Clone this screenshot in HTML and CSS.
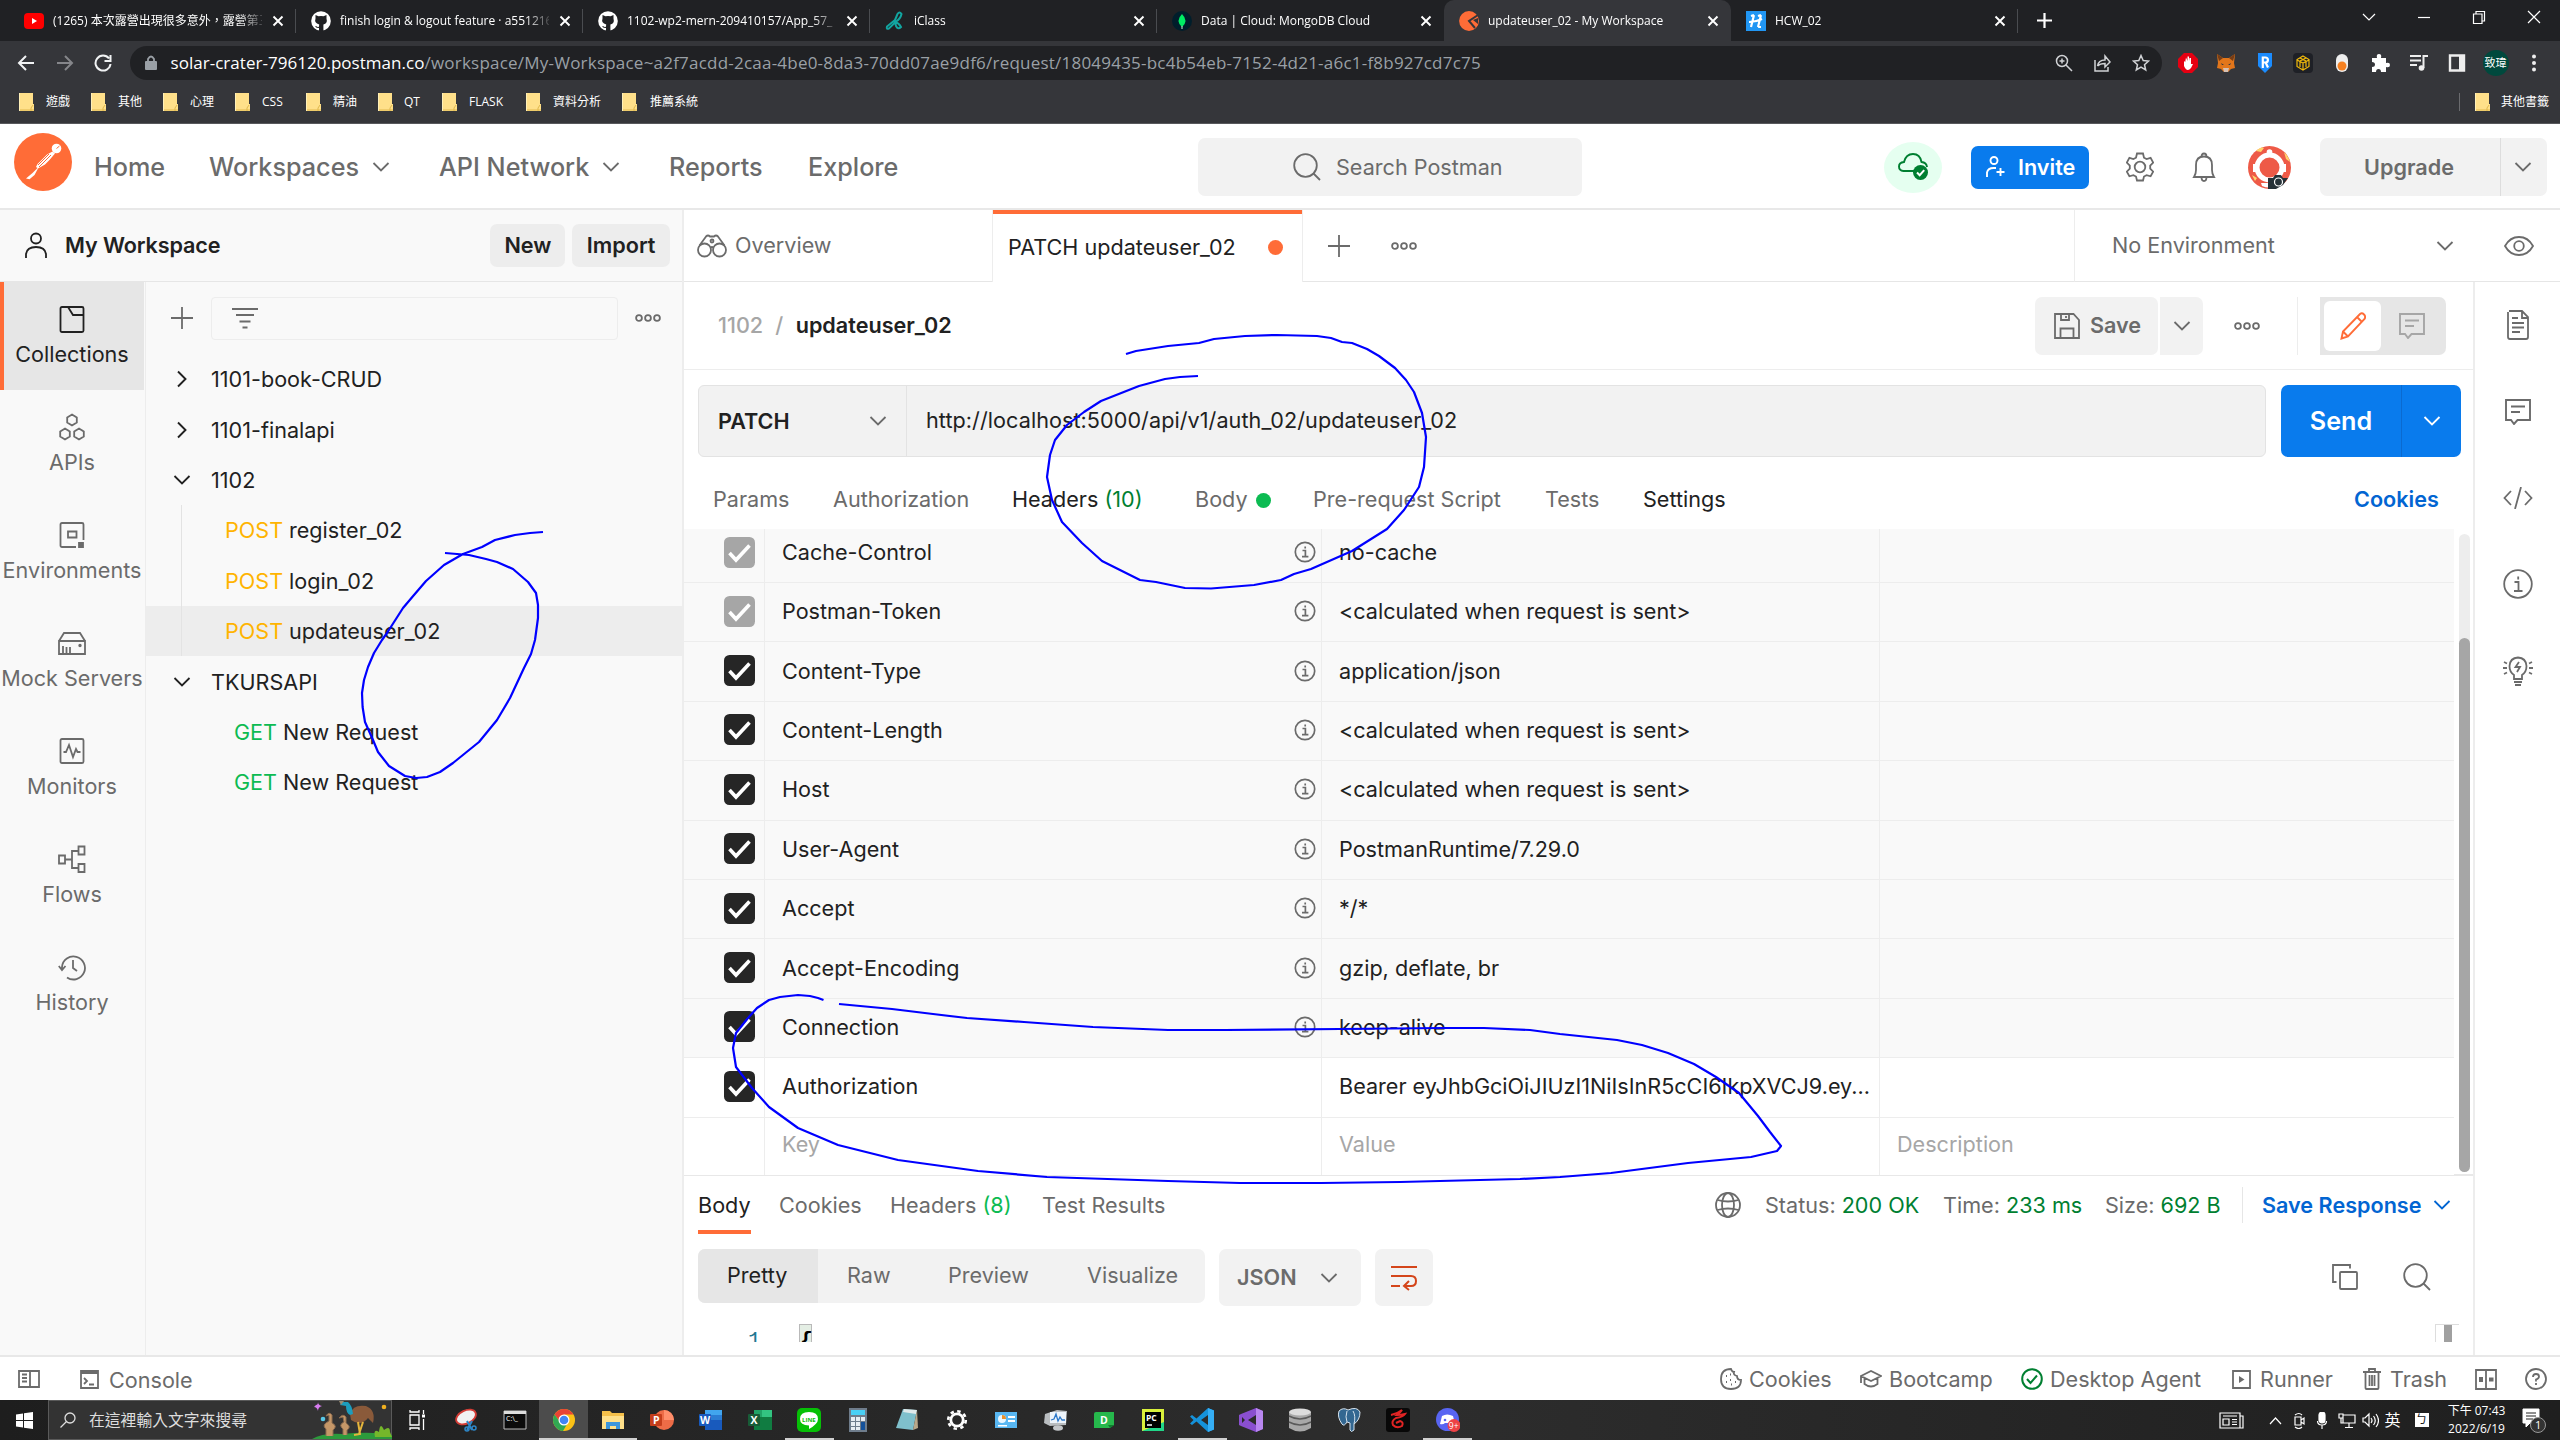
FILE: index.html
```html
<!DOCTYPE html>
<html lang="zh-Hant">
<head>
<meta charset="utf-8">
<title>updateuser_02 - My Workspace</title>
<link rel="stylesheet" href="styles.css">
</head>
<body>
<svg class="sprite" width="0" height="0">
  <symbol id="down" viewBox="0 0 18 12"><path d="M1.5 2 9 9.5 16.5 2" fill="none" stroke="currentColor" stroke-width="1.8"/></symbol>
  <symbol id="right" viewBox="0 0 12 18"><path d="M2 1.5 9.5 9 2 16.5" fill="none" stroke="currentColor" stroke-width="1.9"/></symbol>
  <symbol id="dots" viewBox="0 0 26 10"><g fill="none" stroke="currentColor" stroke-width="1.8"><circle cx="4" cy="5" r="2.9"/><circle cx="13" cy="5" r="2.9"/><circle cx="22" cy="5" r="2.9"/></g></symbol>
  <symbol id="plus" viewBox="0 0 22 22"><path d="M11 0v22M0 11h22" stroke="currentColor" stroke-width="1.8"/></symbol>
  <symbol id="plusbold" viewBox="0 0 15 15"><path d="M7.500 0v15M0 7.500h15" stroke="currentColor" stroke-width="2.200"/></symbol>
  <symbol id="x" viewBox="0 0 12 12"><path d="m1.5 1.5 9 9m0-9-9 9" stroke="currentColor" stroke-width="1.9"/></symbol>
  <symbol id="check" viewBox="0 0 31 31"><rect width="31" height="31" rx="5.5" fill="currentColor"/><path d="m5.500 16 6.500 7L25.500 8.500" fill="none" stroke="#fff" stroke-width="3.600"/></symbol>
  <symbol id="info" viewBox="0 0 22 22"><g fill="none" stroke="currentColor" stroke-width="1.700"><circle cx="11" cy="11" r="9.700"/><path d="M8.500 9.500H11.400V15.500M8 15.700h6.400M11.200 5.500v2"/></g></symbol>
  <symbol id="folder" viewBox="0 0 15 18"><path d="M0 0h14v11h1v7H0z" fill="#ffe08a"/><path d="M0 17h15M14 12l-2 3v3" stroke="#e0b84c" fill="none"/><path d="M.5 0v18" stroke="#fff0b8"/></symbol>
  <symbol id="lens" viewBox="0 0 28 28"><g fill="none" stroke="currentColor" stroke-width="1.800"><circle cx="12.500" cy="12.500" r="11.300"/><path d="m20.500 20.500 6.500 6.500"/></g></symbol>
  <symbol id="note" viewBox="0 0 26 26"><g fill="none" stroke="currentColor" stroke-width="1.900"><path d="M1 1h24v20H12.500l-3.500 4-3-4H1z"/><path d="M6 7.500h14M6 13h9"/></g></symbol>
  <symbol id="github" viewBox="0 0 20 20"><circle cx="10" cy="10" r="9.800" fill="#fff"/><path d="M4.500 4l3 1.200q2.500-.6 5 0L15.500 4v3.500q1.400 5-3.100 6V20H8v-3q-3 .6-4-2l2 .5q1 1.500 2 0l.2-2Q3 12 4.500 7.500z" fill="#202124"/></symbol>
</svg>

<div class="browser">
  <div class="tabs">
    <div class="tab"><svg class="fav" viewBox="0 0 20 20"><rect y="2" width="20" height="16" rx="4" fill="#f00"/><path d="m8 7 5 3-5 3z" fill="#fff"/></svg><span class="t">(1265) 本次露營出現很多意外，露營第三天</span><svg class="x"><use href="#x"/></svg></div>
    <div class="tab"><svg class="fav"><use href="#github"/></svg><span class="t">finish login &amp; logout feature · a551216</span><svg class="x"><use href="#x"/></svg></div>
    <div class="tab"><svg class="fav"><use href="#github"/></svg><span class="t">1102-wp2-mern-209410157/App_57_</span><svg class="x"><use href="#x"/></svg></div>
    <div class="tab"><svg class="fav" viewBox="0 0 20 20"><g fill="none" stroke="#12a5a0" stroke-width="2"><path d="M10 9 12.500 3q2-3 4 0-1 5-6 8L4 17.500q-3 1-2-2zM10 11q4 1 6 5-3 3-5-1z"/></g></svg><span class="t">iClass</span><svg class="x"><use href="#x"/></svg></div>
    <div class="tab nosep"><svg class="fav" viewBox="0 0 20 20"><circle cx="10" cy="10" r="10" fill="#001e2b"/><path d="M10 3q7 7 0 13-7-6 0-13" fill="#00ed64"/><path d="M10 15v3" stroke="#c3f4d7"/></svg><span class="t">Data | Cloud: MongoDB Cloud</span><svg class="x"><use href="#x"/></svg></div>
    <div class="tab active"><svg class="fav" viewBox="0 0 20 20"><circle cx="10" cy="10" r="9.900" fill="#ff6c37"/><path d="m19 4-9 6 6 7" fill="none" stroke="#35363a" stroke-width="2"/><path d="m14 9 5-2v6z" fill="#35363a"/></svg><span class="t">updateuser_02 - My Workspace</span><svg class="x"><use href="#x"/></svg></div>
    <div class="tab"><svg class="fav" viewBox="0 0 20 20"><rect width="20" height="20" fill="#2196f3"/><path d="M8 4 5 16M15 4l-3 12M3 11q7 0 13-3M5 5l3-1M12 16h3M12 5l3-1" stroke="#fff" stroke-width="2.200"/></svg><span class="t">HCW_02</span><svg class="x"><use href="#x"/></svg></div>
    <svg class="newtab"><use href="#plusbold"/></svg>
    <div class="win">
      <svg viewBox="0 0 14 10"><path d="m1 2 6 6 6-6" /></svg>
      <svg viewBox="0 0 14 10"><path d="M1 5.500h12"/></svg>
      <svg viewBox="0 0 14 14"><path d="M1.500 4h8.500v9.500H1.500zM4 4V1.500h8.500V11H10"/></svg>
      <svg viewBox="0 0 14 14"><path d="m1 1 12 12M13 1 1 13"/></svg>
    </div>
  </div>
  <div class="toolbar">
    <svg viewBox="0 0 18 18"><path d="M17 9H2M9 2 2 9l7 7"/></svg>
    <svg class="off" viewBox="0 0 18 18"><path d="M1 9h15M9 2l7 7-7 7"/></svg>
    <svg viewBox="0 0 18 18"><path d="M15 4.500A7.500 7.500 0 1 0 16.500 10M16.500 1v6h-6"/></svg>
    <div class="pill">
      <svg viewBox="0 0 12 16" class="lock"><path d="M3 7V4q3-5 6 0v3" fill="none" stroke="#9aa0a6" stroke-width="1.800"/><rect y="6" width="12" height="9" rx="1" fill="#9aa0a6"/></svg>
      <span class="url"><b>solar-crater-796120.postman.co</b><span>/workspace/My-Workspace~a2f7acdd-2caa-4be0-8da3-70dd07ae9df6/request/18049435-bc4b54eb-7152-4d21-a6c1-f8b927cd7c75</span></span>
      <div class="pillicons">
        <svg viewBox="0 0 18 18"><circle cx="7" cy="7" r="5.500"/><path d="m11 11 6 6M7 4.500v5M4.500 7h5"/></svg>
        <svg viewBox="0 0 18 18"><path d="M2 6v11h13v-4M4.500 12q1-6 7.500-6V2l5 6-5 5V9.500q-5 0-7.500 2.500"/></svg>
        <svg viewBox="0 0 18 18"><path d="m9 1.500 2.200 5 5.300.5-4 3.700 1.200 5.300L9 13.200 4.300 16l1.200-5.300-4-3.700 5.300-.5z"/></svg>
      </div>
    </div>
    <div class="exts">
      <svg viewBox="0 0 20 20"><path d="M6 0h8l6 6v8l-6 6H6l-6-6V6z" fill="#e60012"/><path d="M6 8v5q3 7 7 2l2-4-2 0V5l-1.500 0L11 8V3.500H9.500V8L8 4.500 7.200 9z" fill="#fff"/></svg>
      <svg viewBox="0 0 20 20"><path d="m1 1 6 4h6l6-4-1 9 1 5-4 1-3 3H8l-3-3-4-1 1-5z" fill="#e2761b"/><path d="m1 1 6 4-4 3zM19 1l-6 4 4 3z" fill="#763d16"/><path d="M7 15h6l-1 4H8z" fill="#d7c1b3"/><path d="M5 10l3 2H6zM15 10l-3 2h2z" fill="#233447"/></svg>
      <svg viewBox="0 0 20 20"><path d="M3 0h14v13l-7 7-7-7z" fill="#1b8cff"/><path d="M7.800 15V4.500h2.500q2.600 0 2.600 2.500t-2.600 2.500H8m2.600 0 2.400 5" fill="none" stroke="#fff" stroke-width="2.200"/></svg>
      <svg viewBox="0 0 20 20"><rect width="20" height="20" rx="4" fill="#1e2026"/><path d="m10 3 6 3.500v7L10 17l-6-3.500v-7zM4 7l6 3 6-3M10 10v7M7 5l6 3M13 5 7 8M7 9v5M13 9v5" fill="none" stroke="#f0b90b" stroke-width="1.200"/></svg>
      <svg viewBox="0 0 20 20"><rect x="4" y="1" width="12" height="18" rx="6" fill="#eee"/><circle cx="10" cy="13" r="4.500" fill="#f58020"/></svg>
      <svg viewBox="0 0 20 20"><path d="M2 5h5q-1-4 2-4t2 4h5v5q4-1 4 2t-4 2v5h-5q0-3-2.500-3T6 19H2v-5q3 0 3-2.500T2 9z" fill="#fff"/></svg>
      <svg viewBox="0 0 20 20"><path d="M1 3h11M1 7.500h11M1 12h7M14.500 15V3H19" fill="none" stroke="#eee" stroke-width="2"/><circle cx="12.500" cy="15" r="2.800" fill="#eee"/></svg>
      <svg viewBox="0 0 20 20"><path d="M3 2.500h14v15H3z" fill="none" stroke="#eee" stroke-width="2.400"/><path d="M12 2h5v16h-5z" fill="#eee"/></svg>
      <span class="me">致瑋</span>
      <svg viewBox="0 0 20 20"><g fill="#eee"><circle cx="10" cy="3.500" r="2"/><circle cx="10" cy="10" r="2"/><circle cx="10" cy="16.500" r="2"/></g></svg>
    </div>
  </div>
  <div class="marks">
    <span><svg><use href="#folder"/></svg></span><span>遊戲</span>
    <span><svg><use href="#folder"/></svg></span><span>其他</span>
    <span><svg><use href="#folder"/></svg></span><span>心理</span>
    <span><svg><use href="#folder"/></svg></span><span>CSS</span>
    <span><svg><use href="#folder"/></svg></span><span>精油</span>
    <span><svg><use href="#folder"/></svg></span><span>QT</span>
    <span><svg><use href="#folder"/></svg></span><span>FLASK</span>
    <span><svg><use href="#folder"/></svg></span><span>資料分析</span>
    <span><svg><use href="#folder"/></svg></span><span>推薦系統</span>
    <span class="other"><svg><use href="#folder"/></svg></span><span>其他書籤</span>
  </div>
</div>

<header class="top">
  <svg width="58" height="58" class="logo" viewBox="0 0 58 58"><circle cx="29" cy="29" r="29" fill="#ff6c37"/><circle cx="42.500" cy="15.500" r="4.800" fill="#fff"/><path d="M38.500 18.500 33 21.500 23.500 31 22 34l1.500 1-5 5L12 45.500l3.500.8L20.500 42 24 35.500 31 31.500 35 27.500 41 20.500z" fill="#fff"/><path d="M37 22 25 34M35 21 24 32M42.500 15.500l3-2.500" stroke="#ff6c37" stroke-width="1"/></svg>
  <a>Home</a>
  <a>Workspaces<svg class="dn"><use href="#down"/></svg></a>
  <a>API Network<svg class="dn"><use href="#down"/></svg></a>
  <a>Reports</a>
  <a>Explore</a>
  <div class="search"><svg width="28" height="28"><use href="#lens"/></svg><span>Search Postman</span></div>
  <div class="sync"><svg width="30" height="30" viewBox="0 0 30 30"><path d="M16 19H5.500Q1 18.500 1 14.500T6 10Q8 2 15 2t8.500 8q5 .5 5.500 5" fill="none" stroke="#007f31" stroke-width="1.900"/><circle cx="22.500" cy="20.500" r="7.500" fill="#007f31"/><path d="m19 20.500 2.700 2.700 4.500-5" fill="none" stroke="#fff" stroke-width="2"/></svg></div>
  <div class="invite"><svg width="20" height="22" viewBox="0 0 20 22"><g fill="none" stroke="#fff" stroke-width="1.900"><circle cx="8" cy="4.500" r="3.500"/><path d="M1 21v-4.500Q2 12 7.500 12H10M14.500 12v8M10.500 16h8"/></g></svg><span>Invite</span></div>
  <svg width="28" height="30" viewBox="0 0 28 30" class="ic gear"><path d="M11 1.500h6l1 4.200 2.600 1.400 4-1.200 2.600 4.700-3 3v3l3 3-2.600 4.700-4-1.200-2.600 1.400-1 4h-6l-1-4-2.600-1.400-4 1.200L.8 19.600l3-3v-3l-3-3 2.600-4.700 4 1.200L10 5.700z"/><circle cx="14" cy="15" r="5.300"/></svg>
  <svg width="26" height="30" viewBox="0 0 26 30" class="ic"><path d="M3 25q2-3 2-7v-5q0-8.500 8-8.500t8 8.500v5q0 4 2 7zM10.500 4.500q0-3 2.500-3t2.500 3M10.500 25q0 4 2.500 4t2.500-4"/></svg>
  <svg width="43" height="43" viewBox="0 0 43 43"><circle cx="21.500" cy="21.500" r="21.500" fill="#ee5a47"/><path d="M8 5q5-5 8-3l-3 4zM36 6q5 5 6 10l-4-3zM4 29l5 3-2 3z" fill="#ffd36b"/><circle cx="21.500" cy="21.500" r="12.500" fill="none" stroke="#fff" stroke-width="5"/><circle cx="21.500" cy="6" r="2.800" fill="#fff"/><path d="M5 18h5v8H5zM33 18h5v8h-5zM13 37h15v3q-7 3-14 0z" fill="#fff"/><path d="M20 32h5l2-3h6l2 3h5l-5 7-7 4h-8z" fill="#263238"/><circle cx="30.500" cy="36" r="4" fill="none" stroke="#fff" stroke-width="1.200"/></svg>
  <div class="upgrade"><span>Upgrade</span><svg class="dn"><use href="#down"/></svg></div>
</header>

<div class="app">
  <aside class="left">
    <div class="ws"><svg width="24" height="27" viewBox="0 0 24 27" class="ic dk"><circle cx="12" cy="6.500" r="5"/><path d="M2 26v-4q1-7 10-7t10 7v4"/></svg><b>My Workspace</b><span class="btn new">New</span><span class="btn">Import</span></div>
    <div class="leftbody">
      <nav class="rail">
        <div class="on"><svg viewBox="0 0 28 28"><path d="M4 2h20q1.500 0 1.500 1.500v22Q25.500 27 24 27H4q-1.500 0-1.500-1.500v-22Q2.500 2 4 2M10 2l5 8h10.500"/></svg>Collections</div>
        <div><svg viewBox="0 0 28 28"><path d="m14 1.500 4.800 3v5l-4.800 3-4.800-3v-5zM7 15.500l4.800 3v5l-4.800 3-4.800-3v-5zM21 15.500l4.800 3v5l-4.800 3-4.800-3v-5z"/></svg>APIs</div>
        <div><svg viewBox="0 0 28 28"><path d="M18 26H4q-1.500 0-1.500-1.500v-21Q2.500 2 4 2h20q1.500 0 1.500 1.500V19M10 10.500h8.500v6H10z"/><path d="M21 22h4v4h-4z" fill="#6b6b6b"/></svg>Environments</div>
        <div><svg viewBox="0 0 28 28"><path d="M1 12h26v13H1zM1 12 6 4h16l5 8M5 17v8M8.500 18v7M12 18v7"/><circle cx="22" cy="16.500" r=".8"/></svg>Mock Servers</div>
        <div><svg viewBox="0 0 28 28"><path d="M4 2h20q1.500 0 1.500 1.500v21Q25.500 26 24 26H4q-1.500 0-1.500-1.500v-21Q2.500 2 4 2M5.500 15H8l3-7 4 12 3-8 1.500 3h3"/></svg>Monitors</div>
        <div><svg viewBox="0 0 28 28"><path d="M1 10.500h6v8H1zM20.500 1.500h6v8h-6zM20.500 19h6v8h-6zM7 14.500h7M20 6h-6v17h6"/></svg>Flows</div>
        <div><svg viewBox="0 0 28 28"><path d="M9 24.500A11.500 11.500 0 1 0 4 14v3M.8 13 4 17l3.500-4M15 7v8l4 3"/></svg>History</div>
      </nav>
      <div class="tree">
        <div class="filter"><svg width="22" height="22"><use href="#plus"/></svg><div class="fbox"><svg width="26" height="22" viewBox="0 0 26 22" class="ic"><path d="M0 2h26M4 8h18M7.500 14.500h11M10.500 20.500h5"/></svg></div><svg width="26" height="10"><use href="#dots"/></svg></div>
        <div class="row"><svg class="rt"><use href="#right"/></svg>1101-book-CRUD</div>
        <div class="row"><svg class="rt"><use href="#right"/></svg>1101-finalapi</div>
        <div class="row"><svg class="dn"><use href="#down"/></svg>1102</div>
        <div class="row req"><i>POST</i>register_02</div>
        <div class="row req"><i>POST</i>login_02</div>
        <div class="row req sel"><i>POST</i>updateuser_02</div>
        <div class="row"><svg class="dn"><use href="#down"/></svg>TKURSAPI</div>
        <div class="row get"><i>GET</i>New Request</div>
        <div class="row get"><i>GET</i>New Request</div>
      </div>
    </div>
  </aside>

  <div class="work">
    <div class="wtabs">
      <div class="ov"><svg width="30" height="24" viewBox="0 0 30 24" class="ic"><circle cx="7.500" cy="16" r="6.500"/><circle cx="22.500" cy="16" r="6.500"/><path d="M2.500 11.500 9 2.500q2-2 4 0h4q2-2 4 0l6.500 9M14 14q1-2 2 0"/><circle cx="15" cy="7" r="1.500"/></svg><span>Overview</span></div>
      <div class="cur"><span>PATCH updateuser_02</span><em></em></div>
      <div class="rest"><svg width="22" height="22"><use href="#plus"/></svg><svg width="26" height="10"><use href="#dots"/></svg></div>
      <div class="env"><span>No Environment</span><svg class="dn"><use href="#down"/></svg><svg width="30" height="22" viewBox="0 0 30 22" class="ic"><path d="M1 11Q6 2 15 2t14 9q-5 9-14 9T1 11z"/><circle cx="15" cy="11" r="4.800"/></svg></div>
    </div>
    <div class="wbody">
      <main>
        <div class="crumb">
          <span class="mut">1102</span><span class="mut sl">/</span><b>updateuser_02</b>
          <div class="save"><svg width="26" height="26" viewBox="0 0 26 26" class="ic"><path d="M1 1h18.500L25 7v18H1zM6.500 25V15.500h13V25M7 1v6h8V1M12 3v2"/></svg><span>Save</span></div>
          <div class="savedn"><svg class="dn"><use href="#down"/></svg></div>
          <svg width="26" height="10" class="more"><use href="#dots"/></svg>
          <div class="toggle"><div><svg width="26" height="28" viewBox="0 0 26 28" fill="none" stroke="#ff6c37" stroke-width="1.900"><path d="m1.500 26.500 1.500-7L20 2q2-1.500 4 .5t.5 4.500L8 24.500zM17 5l5 5M3 19.500l5 5"/></svg></div><svg width="26" height="26" class="lt"><use href="#note"/></svg></div>
        </div>
        <div class="send">
          <div class="url2"><b>PATCH</b><svg class="dn"><use href="#down"/></svg><span>http://localhost:5000/api/v1/auth_02/updateuser_02</span></div>
          <div class="sbtn"><b>Send</b><span><svg class="dn"><use href="#down"/></svg></span></div>
        </div>
        <div class="rtabs">
          <span>Params</span><span>Authorization</span><span class="on">Headers <i>(10)</i></span><span>Body<em></em></span><span>Pre-request Script</span><span>Tests</span><span class="dk">Settings</span><b>Cookies</b>
        </div>
        <div class="tablewrap">
          <div class="table">
            <div class="tr first"><span><svg class="ck g"><use href="#check"/></svg></span><span>Cache-Control<svg class="inf"><use href="#info"/></svg></span><span>no-cache</span><span></span></div>
            <div class="tr"><span><svg class="ck g"><use href="#check"/></svg></span><span>Postman-Token<svg class="inf"><use href="#info"/></svg></span><span>&lt;calculated when request is sent&gt;</span><span></span></div>
            <div class="tr"><span><svg class="ck"><use href="#check"/></svg></span><span>Content-Type<svg class="inf"><use href="#info"/></svg></span><span>application/json</span><span></span></div>
            <div class="tr"><span><svg class="ck"><use href="#check"/></svg></span><span>Content-Length<svg class="inf"><use href="#info"/></svg></span><span>&lt;calculated when request is sent&gt;</span><span></span></div>
            <div class="tr"><span><svg class="ck"><use href="#check"/></svg></span><span>Host<svg class="inf"><use href="#info"/></svg></span><span>&lt;calculated when request is sent&gt;</span><span></span></div>
            <div class="tr"><span><svg class="ck"><use href="#check"/></svg></span><span>User-Agent<svg class="inf"><use href="#info"/></svg></span><span>PostmanRuntime/7.29.0</span><span></span></div>
            <div class="tr"><span><svg class="ck"><use href="#check"/></svg></span><span>Accept<svg class="inf"><use href="#info"/></svg></span><span>*/*</span><span></span></div>
            <div class="tr"><span><svg class="ck"><use href="#check"/></svg></span><span>Accept-Encoding<svg class="inf"><use href="#info"/></svg></span><span>gzip, deflate, br</span><span></span></div>
            <div class="tr"><span><svg class="ck"><use href="#check"/></svg></span><span>Connection<svg class="inf"><use href="#info"/></svg></span><span>keep-alive</span><span></span></div>
            <div class="tr plain"><span><svg class="ck"><use href="#check"/></svg></span><span>Authorization</span><span>Bearer eyJhbGciOiJIUzI1NiIsInR5cCI6IkpXVCJ9.ey...</span><span></span></div>
            <div class="tr plain ph"><span></span><span>Key</span><span>Value</span><span>Description</span></div>
          </div>
          <div class="bar"><div></div></div>
        </div>
        <div class="resp">
          <span class="on">Body</span><span>Cookies</span><span>Headers <i>(8)</i></span><span>Test Results</span>
          <svg width="26" height="26" viewBox="0 0 26 26" class="ic"><circle cx="13" cy="13" r="12"/><ellipse cx="13" cy="13" rx="6" ry="12"/><path d="M2.500 8q10.500 3 21 0M2.500 18q10.500-3 21 0"/></svg>
          <span>Status: <u>200 OK</u></span><span>Time: <u>233 ms</u></span><span>Size: <u>692 B</u></span>
          <b>Save Response<svg class="dn"><use href="#down"/></svg></b>
        </div>
        <div class="fmt">
          <div class="seg"><span class="on">Pretty</span><span>Raw</span><span>Preview</span><span>Visualize</span></div>
          <div class="json"><b>JSON</b><svg class="dn"><use href="#down"/></svg></div>
          <div class="wrap"><svg width="26" height="26" viewBox="0 0 26 26" fill="none" stroke="#d4451a" stroke-width="2"><path d="M0 2h26M0 11h20q5 0 5 5t-5 5h-6M0 21h9M18 16l-5 5 5 4"/></svg></div>
          <svg width="26" height="26" viewBox="0 0 26 26" class="ic"><path d="M9 8h15q1 0 1 1v15q0 1-1 1H9q-1 0-1-1V9q0-1 1-1M4.500 18H1V1h17v3.500"/></svg>
          <svg width="28" height="28" class="ic2"><use href="#lens"/></svg>
        </div>
        <div class="code"><span class="ln">1</span><span class="brace">{</span><span class="mini"></span></div>
      </main>
      <aside class="rrail">
        <svg width="24" height="30" viewBox="0 0 24 30" class="ic"><path d="M3 1h13l6 6v20q0 2-2 2H4q-2 0-2-2V2M16 1v7h6M6 8h6M6 13h12M6 17.500h12M6 22h8"/></svg>
        <svg width="26" height="26"><use href="#note"/></svg>
        <svg width="30" height="22" viewBox="0 0 30 22" class="ic"><path d="M8 4 1.500 11 8 18M22 4l6.500 7L22 18M18 0l-6 22"/></svg>
        <svg width="30" height="30" viewBox="0 0 30 30" class="ic"><circle cx="15" cy="15" r="13.800"/><path d="M11.500 13h4v9M11 22h8.500M15.200 7.500v3"/></svg>
        <svg width="30" height="30" viewBox="0 0 30 30" class="ic"><path d="M11 23v-4q-4.500-3-4.500-9Q7 2 15 1.500 23 2 23.500 10q0 6-4.500 9v4zM11 26h8M12 29h6M16 6l-3.500 5H17l-3 5M0 12h4M26 12h4M1 6l3 1.500M29 6l-3 1.500M1 18l3-1.500M29 18l-3-1.500"/></svg>
      </aside>
    </div>
  </div>
</div>

<footer>
  <svg width="22" height="18" viewBox="0 0 22 18" class="ic"><path d="M1 1h20v16H1zM12 1v16M4 4.500h5M4 8h5M4 11.500h5"/></svg>
  <svg width="19" height="19" viewBox="0 0 19 19" class="ic"><path d="M1 1h17v17H1zM1 3h17M4 8l3 3-3 3M9 14.500h5"/></svg><span class="con">Console</span>
  <svg width="24" height="22" viewBox="0 0 24 22" class="ic"><path d="M12 1q-10 0-10 10t10 10 10-9q-4 0-4-4-4-1-3-4-2 0-3-3z"/><path d="M7 8h1M11 12h1M7 14h1M12 16.500h1M16 14h1M11 6.500h1" stroke-width="2"/></svg><span>Cookies</span>
  <svg width="22" height="18" viewBox="0 0 22 18" class="ic"><path d="m1 6 10-5 10 5-10 5zM4.500 8v6q6.500 5 13 0V8M1 6v7"/></svg><span>Bootcamp</span>
  <svg width="22" height="22" viewBox="0 0 22 22" fill="none" stroke="#007f31" stroke-width="2"><circle cx="11" cy="11" r="9.800"/><path d="m6 11 3.500 4L16 7.500"/></svg><span>Desktop Agent</span>
  <svg width="19" height="19" viewBox="0 0 19 19" class="ic"><path d="M1 1h17v17H1z"/><path d="m7 6 5.500 3.500L7 13z" fill="#6b6b6b" stroke="none"/></svg><span>Runner</span>
  <svg width="18" height="22" viewBox="0 0 18 22" class="ic"><path d="M0 4h18M6 3V1h6v2M2.500 4v16q0 1 1 1h11q1 0 1-1V4M6.500 7v11M9 7v11M11.500 7v11"/></svg><span>Trash</span>
  <svg width="22" height="21" viewBox="0 0 22 21" class="ic"><path d="M1 1h20v19H1zM11 1v19"/><path d="M4 8h4v5H4zM14 8.500h4.500v4H14z" fill="#6b6b6b" stroke="none"/></svg>
  <svg width="22" height="22" viewBox="0 0 22 22" class="ic"><circle cx="11" cy="11" r="10"/><path d="M8 9q0-3 3-3t3 2.500Q14 10.500 11 11.500V13.500M11 15v2"/></svg>
</footer>

<div class="task">
  <div class="start"><svg width="17" height="17" viewBox="0 0 17 17"><path d="m0 2.500 7-1V8H0zM8 1.300 17 0v8H8zM0 9h7v6.500l-7-1zM8 9h9v8l-9-1.300z" fill="#fff"/></svg></div>
  <div class="tsearch"><svg width="16" height="16" viewBox="0 0 16 16"><circle cx="10" cy="6" r="5" fill="none" stroke="#ddd" stroke-width="1.300"/><path d="m6.500 9.500-6 6" stroke="#ddd" stroke-width="1.300"/></svg><span>在這裡輸入文字來搜尋</span>
    <svg class="birds" width="80" height="38" viewBox="0 0 80 38"><path d="M0 38q10-6 30-5 30-3 50 1v4z" fill="#2c9a3c"/><path d="M63 36q-2-9 4-5 1-11 5-2 6-5 6 2l2 5z" fill="#75b72b"/><path d="M38 13q3-10 16-8 10 4 7 17l-5-5q-7 9-17 2z" fill="#8a5a3a"/><path d="M38 14q-4-2-4-9l-6-1 2-3h6q4 3 5 12z" fill="#1c9dbd"/><path d="M32 0h-5l2 4z" fill="#9a8a70"/><path d="M46 21l2 12-6 1M51 21l-4 12" stroke="#e5b53c" stroke-width="2" fill="none"/><path d="M14 35v-7q-5-4 3-8v-6l-3 1q3-5 6-1v8q6 3 1 7v6M31 34v-6q-5-4 1-7l-1-5-4 1q4-5 7-1v6q6 4 1 7v5" fill="#c59768" stroke="#8d6c4f"/><path d="M4 4q2 0 2-3 0 3 4 4-4 1-4 5-1-4-4-4z" fill="#d87cf0"/><circle cx="11" cy="18" r="2.300" fill="#58c8e8"/><circle cx="72" cy="6" r="2.300" fill="#f0b020"/></svg></div>
  <div class="apps">
    <div><svg viewBox="0 0 24 24"><path d="M5 7h9v10H5zM5 2v2h9V2M5 22v-2h9v2M18.500 2v4M18.500 11v11" fill="none" stroke="#fff" stroke-width="1.300"/><path d="M17 6.500h3v3h-3z" fill="#fff"/></svg></div>
    <div><svg viewBox="0 0 24 24"><ellipse cx="12" cy="9" rx="10.500" ry="6.500" transform="rotate(-25 12 9)" fill="#f1f1f1" stroke="#d43c35" stroke-width="1.800"/><path d="m13 13 5 9M18 13l-5 9" stroke="#2d87c8" stroke-width="2"/><circle cx="13" cy="21" r="2" fill="none" stroke="#2d87c8" stroke-width="1.500"/><circle cx="20" cy="20" r="2" fill="none" stroke="#2d87c8" stroke-width="1.500"/></svg></div>
    <div><svg viewBox="0 0 24 24"><path d="M1 3h22v18H1z" fill="#0b0b0b" stroke="#bbb"/><path d="M1 3h22v3H1z" fill="#ddd"/><text x="3" y="13" fill="#fff" font-size="7">C:\_</text></svg></div>
    <div class="act run"><svg viewBox="0 0 24 24"><circle cx="12" cy="12" r="11" fill="#fbc116"/><path d="M2.500 6.500A11 11 0 0 1 21.500 6.500H12L8 14z" fill="#e94335"/><path d="M2.500 6.500A11 11 0 0 0 11 23l5-8.500-8-.5z" fill="#31a853"/><circle cx="12" cy="12" r="5.500" fill="#fff"/><circle cx="12" cy="12" r="4.300" fill="#4285f4"/></svg></div>
    <div class="run"><svg viewBox="0 0 24 24"><path d="M1 3h8l2 2h12v16H1z" fill="#f5c04a"/><path d="M1 8h22v13H1z" fill="#ffe08a"/><path d="M5 21v-7h14v7h-4v-3H9v3z" fill="#3c96dc"/></svg></div>
    <div><svg viewBox="0 0 24 24"><circle cx="14" cy="12" r="10" fill="#ed6c47"/><path d="M14 2a10 10 0 0 1 10 10H14z" fill="#ff8f6b"/><rect y="6" width="12" height="12" rx="1" fill="#c43e1c"/><text x="3" y="15.500" class="glyph">P</text></svg></div>
    <div><svg viewBox="0 0 24 24"><path d="M6 2h17v20H6z" fill="#185abd"/><path d="M6 2h17v5H6z" fill="#41a5ee"/><path d="M6 7h17v5H6z" fill="#2b7cd3"/><rect y="6" width="12" height="12" rx="1" fill="#185abd"/><text x="1" y="15.500" class="glyph">W</text></svg></div>
    <div><svg viewBox="0 0 24 24"><path d="M6 2h18v20H6z" fill="#107c41"/><path d="M14 2h10v7H14z" fill="#33c481"/><path d="M6 2h8v7H6z" fill="#21a366"/><rect y="6" width="12" height="12" rx="1" fill="#185c37"/><text x="2.500" y="15.500" class="glyph">X</text></svg></div>
    <div class="run"><svg viewBox="0 0 24 24"><rect width="24" height="24" rx="5" fill="#06c006"/><path d="M12 4q9 0 9 7 0 5-9 10v-3.500Q3 17 3 11q0-7 9-7" fill="#fff"/><text x="5" y="13.500" font-size="6" font-weight="700" fill="#06c006">LINE</text></svg></div>
    <div><svg viewBox="0 0 24 24"><rect x="3" width="18" height="24" fill="#6f7d8c"/><path d="M5 2h14v5H5z" fill="#4ad0f5"/><path d="M5 9h4v4H5zM10 9h4v4h-4zM15 9h4v4h-4zM5 14h4v4H5zM10 14h4v4h-4zM5 19h4v3H5zM10 19h4v3h-4z" fill="#e8edf2"/><path d="M15 14h4v8h-4z" fill="#14519a"/></svg></div>
    <div><svg viewBox="0 0 24 24"><path d="m8 1 14 1-4 20-17-2z" fill="#7fc0cc"/><path d="m9 1 13 1-1 4L8 4z" fill="#dfe9ea"/><path d="m18 22 4-20 1 18z" fill="#b9a88a"/></svg></div>
    <div><svg viewBox="0 0 24 24"><circle cx="12" cy="12" r="6.200" fill="none" stroke="#fff" stroke-width="2.800"/><circle cx="12" cy="12" r="8.800" fill="none" stroke="#fff" stroke-width="2.600" stroke-dasharray="3.450 3.450"/></svg></div>
    <div><svg viewBox="0 0 24 24"><rect x="1" y="4" width="22" height="16" fill="#58b7f2"/><circle cx="8" cy="11" r="4" fill="#e9f6ff"/><path d="M8 11V7a4 4 0 0 1 4 4z" fill="#e8902c"/><path d="M14 8h7v2h-7zM14 12h7v2h-7zM4 17h9v1.500H4z" fill="#fff"/></svg></div>
    <div><svg viewBox="0 0 24 24"><path d="M2 6 14 2l10 1-1 14-16 1-6-3z" fill="#b9bdc0"/><path d="M7 4h16v11H7z" fill="#edf4fb"/><path d="m8 12 3-1 2-5 2 7 2-4 2 3h3" fill="none" stroke="#2a77c9" stroke-width="1.300"/><ellipse cx="15" cy="20" rx="5" ry="2.800" fill="#c4c7ca"/></svg></div>
    <div><svg viewBox="0 0 24 24"><path d="M2 6q0-2 2-2h18v13l-4 3H2z" fill="#26b84c"/><path d="m22 17-4 3-2-3z" fill="#107c30"/><text x="8" y="16" class="glyph">D</text></svg></div>
    <div><svg viewBox="0 0 24 24"><path d="M1 1h22v22H1z" fill="#d9f03b"/><path d="m1 23 22-9v9z" fill="#21d789"/><path d="M4 4h16v16H4z" fill="#000"/><text x="5" y="12.500" font-size="8.500" font-weight="700" fill="#fff">PC</text><path d="M6 17h5" stroke="#fff" stroke-width="1.500"/></svg></div>
    <div class="run"><svg viewBox="0 0 24 24"><path d="m18 0 6 2.500v19L18 24 6.500 13.500 2 17l-2-1.500L3.500 12 0 8.500 2 7l4.500 3.500zM18 7l-7 5 7 5z" fill="#1592da"/><path d="m18 0 6 2.500v19L18 24z" fill="#35aef5"/></svg></div>
    <div><svg viewBox="0 0 24 24"><path d="M17 0 24 3v18l-7 3L2 18 0 17V7l2-1zM17 7l-8 5 8 5zM3 9v6l3-3z" fill="#8a4fd0" fill-rule="evenodd"/><path d="m17 0 7 3v18l-7 3z" fill="#b987f0"/></svg></div>
    <div><svg viewBox="0 0 24 24"><path d="M1 4v16q11 7 22 0V4z" fill="#a8a8a8"/><path d="M1 8q11 6 22 0M1 14q11 6 22 0" stroke="#5a5a5a" fill="none" stroke-width="1.500"/><ellipse cx="12" cy="4" rx="11" ry="3.500" fill="#dcdcdc"/></svg></div>
    <div><svg viewBox="0 0 24 24"><path d="M2 3q4-4 9-1 9-4 12 2 0 8-6 12v6q-3 3-4 0v-7l-3-1q-3 5-5 2Q0 9 2 3" fill="#336791" stroke="#d6e2ec"/><path d="M10 3q-2 6 0 11M16 3q3 5 1 13" fill="none" stroke="#d6e2ec"/></svg></div>
    <div><svg viewBox="0 0 24 24"><rect width="24" height="24" rx="3" fill="#080808"/><path d="M5 7q6-1 11-5-2 3-5 5 4 0 8-1-2 3-9 4-5 3-3 7 4 4 9 1 2-4-2-5l-4 2" fill="none" stroke="#e02424" stroke-width="2"/></svg></div>
    <div class="run"><svg viewBox="0 0 24 24"><circle cx="11.500" cy="11.500" r="11.500" fill="#5865f2"/><path d="M6 8q5-3 11 0l2 8q-3 1-4-1H9q-2 2-5 1z" fill="#fff"/><circle cx="9" cy="12" r="1.300" fill="#5865f2"/><circle cx="18" cy="17.500" r="6.500" fill="#ed4245"/><text x="12.800" y="20.500" font-size="8.500" fill="#fff">9+</text></svg></div>
  </div>
  <div class="tray">
    <svg width="25" height="17" viewBox="0 0 25 17"><path d="M1 1h20v15H1zM21 4h3v12H1M4 4h14M4 7h6v6H4zM13 7.500h5M13 10h5M13 12.500h5"/></svg>
    <svg width="13" height="17" viewBox="0 0 13 17"><path d="m1 12 5.500-6 5.500 6"/></svg>
    <svg width="13" height="17" viewBox="0 0 13 17"><path d="M2 5h6v8H2zM8 8l3-2v6l-3-2M2 3q4-3 7 0M2 15q4 3 7 0"/></svg>
    <svg width="12" height="17" viewBox="0 0 12 17"><rect x="3" width="6" height="11" rx="3" fill="#fff"/><path d="M1.500 9q0 4 4.500 4t4.500-4M6 13v4"/></svg>
    <svg width="18" height="17" viewBox="0 0 18 17"><path d="M5 3h12v8H5zM11 11v4M7 15.500h8M1 2h4v4H1zM3 6v5h3"/></svg>
    <svg width="17" height="17" viewBox="0 0 17 17"><path d="M1 6h2l4-4v12L3 10H1zM9 6q2 2.500 0 5M11.500 4q3.500 4.500 0 9M14 2q5 6.500 0 13"/></svg>
    <span class="ime">英</span>
    <span class="zh">ㄅ</span>
    <span class="clock">下午 07:43<br>2022/6/19</span>
    <span class="noti"><svg width="24" height="30" viewBox="0 0 24 30"><path d="M1 1h16v14H8l-4 4v-4H1z" fill="#fff"/><path d="M4 5h10M4 8h10M4 11h7" stroke="#222"/><circle cx="16" cy="17" r="7.500" fill="#333" stroke="#999"/><text x="13" y="21" font-size="11" fill="#fff" stroke="none">1</text></svg></span>
  </div>
</div>

<svg class="ink" viewBox="0 0 2560 1440">
  <path d="M543 532 530 533 515 535 495 540 482 547 463 554 444 565 426 581 414 595 403 608 387 633 382 640 374 653 368 667 364 680 362 693 362.600 707 365 722 373 740 378 752 389 766 405 776 416 778 427 777 440 772 453 763 479 742 497 720 510 698 524 668 531 654 535 640 538 618 538 605 536 593 528 582 513 569 497 562 486 559 469 555 445 553"/>
  <path d="M1126 354 1136 351 1168 346 1199 343 1214 339 1245 336 1277 335 1317 336 1331 338 1342 342 1352 343 1367 349 1379 356 1395 368 1406 380 1414 392 1422 413 1426 437 1424 467 1419 487 1404 510 1387 529 1352 551 1311 569 1294 574 1281 580 1254 585 1211 588.500 1185 588 1156 582 1140 580 1120 570 1102 561 1082 543 1062 522 1052 500 1047 477 1050 455 1055 440 1067 425 1084 412 1101 401 1139 386 1165 379 1180 377 1198 376"/>
  <path d="M823.500 1000 818 998 810 996 798 995 780 997 769 1000 757 1008 748 1018 736 1033 733 1048 736 1067 752 1088 769 1107 798 1128 838 1145 898 1160 978 1171 1047 1177 1168 1181 1240 1183 1321 1183 1400 1182 1520 1179 1560 1177 1611 1173 1688 1163 1751 1157 1777 1151 1781 1146 1770 1132 1758 1116 1739 1093 1716 1077 1694 1064 1668 1053 1642 1045 1617 1040 1560 1034 1530 1030 1484 1028 1443 1028 1340 1029 1225 1030 1168 1030 1093 1027 1024 1022 967 1018 933 1014 892 1009 839 1004"/>
</svg>
</body>
</html>
```
FILE: styles.css
```css
* { box-sizing: border-box; }
body {
  margin: 0; width: 2560px; height: 1440px; overflow: hidden; position: relative;
  font: 400 21.6px/1.3 Inter, "Liberation Sans", sans-serif; color: #212121; background: #fff;
  display: flex; flex-direction: column; white-space: nowrap;
}
svg { display: block; flex: none; }
i { font-style: normal; }
b { font-weight: 600; }
u { text-decoration: none; color: #007f31; }
.sprite { position: absolute; }
.ic { fill: none; stroke: #6b6b6b; stroke-width: 1.8; color: #6b6b6b; }
.ic2 { color: #6b6b6b; }
.ic.dk { stroke: #212121; }
.dn { width: 18px; height: 12px; }
.rt { width: 12px; height: 18px; }

/* browser window */
.browser { height: 124px; flex: none; background: #35363a; border-bottom: 1px solid #58595c; color: #fff; font: 12px/1.3 "Open Sans", "Noto Sans CJK TC", sans-serif; }
.tabs { height: 41px; background: #202124; display: flex; padding-left: 9px; }
.tab { width: 287px; height: 41px; padding: 0 12px 0 15px; display: flex; align-items: center; background: linear-gradient(#4a4c50, #4a4c50) right 0 top 9px/1.5px 24px no-repeat; }
.tab.nosep { background: none; }
.tab.active { background: #35363a; border-radius: 10px 10px 0 0; }
.fav { width: 20px; height: 20px; margin-right: 9px; }
.t { flex: 1; overflow: hidden; margin-right: 10px; -webkit-mask-image: linear-gradient(90deg, #000 185px, transparent 214px); mask-image: linear-gradient(90deg, #000 185px, transparent 214px); }
.x { width: 12px; height: 12px; }
.newtab { width: 15px; height: 15px; margin: 13px 0 0 19px; }
.win { margin-left: auto; margin-right: 19px; display: flex; gap: 41px; height: 34px; align-items: center; }
.win svg { width: 14px; height: 14px; fill: none; stroke: #fff; stroke-width: 1.2; }
.toolbar { height: 44px; display: flex; align-items: center; padding-left: 17px; }
.toolbar > svg { width: 18px; height: 18px; margin-right: 20.5px; fill: none; stroke: #f1f3f4; stroke-width: 2; }
.toolbar > svg.off { stroke: #85868a; }
.pill { width: 2032px; height: 34px; border-radius: 17px; background: #202124; display: flex; align-items: center; margin-left: -3px; padding-left: 15px; }
.lock { width: 12px; height: 16px; }
.url { font-size: 17px; color: #9aa0a6; margin-left: 14px; letter-spacing: .22px; }
.url b { font-weight: 400; color: #fff; letter-spacing: .03px; }
.pillicons { display: flex; margin-left: auto; gap: 20.5px; padding-right: 12px; }
.pillicons svg { width: 18px; height: 18px; fill: none; stroke: #d0d2d5; stroke-width: 1.5; }
.exts { display: flex; gap: 18.5px; margin-left: 16px; align-items: center; }
.exts > svg { width: 20px; height: 20px; }
.me { width: 26px; height: 26px; margin: 0 -3px; border-radius: 50%; background: #00493d; font-size: 11px; line-height: 25px; text-align: center; }
.marks { height: 34px; padding-left: 19px; display: grid; grid-template-columns: 27px 45px 27px 45px 27px 45px 27px 44px 27px 45px 26px 38px 27px 57px 27px 69px 28px 1809px 42px 60px; align-items: center; }
.marks svg { width: 15px; height: 18px; }
.other { border-left: 1px solid #6a6b6e; padding-left: 15px; }

/* product header */
.top { height: 86px; flex: none; border-bottom: 2px solid #e8e8e8; padding: 2px 0 0 14px; display: grid; grid-template-columns: 80px 115px 230px 230px 139px 390px 686px 87px 156px 64px 57px 72px 240px; align-items: center; font-size: 25.2px; font-weight: 500; color: #6b6b6b; }
.logo { margin-top: -10px; }
.gear { margin-left: -1px; }
.top a { display: flex; align-items: center; }
.top a .dn { margin-left: 13px; }
.search { width: 384px; height: 58px; border-radius: 7px; background: #f2f2f2; display: flex; align-items: center; padding-left: 95px; gap: 15px; font-size: 21.6px; font-weight: 400; }
.sync { width: 58px; height: 51px; border-radius: 50%; background: #e5fff0; display: grid; place-items: center; }
.invite { width: 118px; height: 43px; border-radius: 7px; background: #097bed; color: #fff; display: flex; align-items: center; padding-left: 15px; gap: 12px; font-size: 21.6px; font-weight: 600; }
.upgrade { width: 227px; height: 58px; border-radius: 7px; background: #f2f2f2; display: flex; align-items: center; font-size: 21.6px; font-weight: 600; }
.upgrade span { width: 181px; line-height: 58px; padding-right: 2px; text-align: center; border-right: 1px solid #ddd; margin-right: 13px; }

.app { flex: 1; min-height: 0; display: flex; }
.left { width: 684px; flex: none; border-right: 2px solid #ededed; background: #f9f9f9; display: flex; flex-direction: column; }
.ws { height: 72px; border-bottom: 1px solid #e6e6e6; display: flex; align-items: center; padding: 0 12px 0 24px; }
.ws b { margin-left: 17px; letter-spacing: -.12px; }
.btn { height: 43px; line-height: 43px; padding: 0 14.5px; border-radius: 7px; background: #ededed; font-weight: 600; }
.btn.new { margin: 0 7px 0 auto; padding: 0 14px; }
.leftbody { flex: 1; display: flex; }
.rail { width: 146px; border-right: 1px solid #ededed; color: #6b6b6b; }
.rail div { height: 108px; width: 144px; display: flex; flex-direction: column; align-items: center; padding-top: 23px; line-height: 28px; gap: 7px; }
.rail svg { width: 28px; height: 28px; fill: none; stroke: currentColor; stroke-width: 1.8; }
.rail .on { background: #e6e6e6; color: #212121; box-shadow: inset 4px 0 #ff6c37; }
.tree { flex: 1; }
.filter { height: 72px; display: flex; align-items: center; padding: 0 0 0 25px; color: #6b6b6b; }
.fbox { width: 407px; height: 43px; margin: 0 17px 0 18px; border: 1px solid #ededed; border-radius: 4px; display: flex; align-items: center; padding-left: 20px; }
.row { height: 50.4px; display: grid; grid-template-columns: 65px auto; align-items: center; justify-content: start; justify-items: start; }
.row .rt { margin-left: 30px; }
.row .dn { margin-left: 27px; }
.row i { color: #ffb400; }
.row.req { grid-template-columns: 108px auto; padding-left: 35px; background: linear-gradient(#e3e3e3, #e3e3e3) 35px 0/1px 100% no-repeat; }
.row.req i { padding-left: 44px; }
.row.sel { background-color: #ededed; }
.row.get { grid-template-columns: 137px auto; }
.row.get i { color: #0cbb52; padding-left: 88px; }

.work { flex: 1; min-width: 0; display: flex; flex-direction: column; }
.wtabs { height: 72px; flex: none; display: grid; grid-template-columns: 308px 311px 771px 486px; color: #6b6b6b; }
.wtabs > div { display: flex; align-items: center; border-bottom: 1px solid #e6e6e6; }
.ov { padding-left: 13px; gap: 8px; }
.wtabs .cur { border: solid #ededed; border-width: 0 1px; box-shadow: inset 0 4px #ff6c37; color: #212121; padding: 2px 19px 0 15px; justify-content: space-between; }
.cur em, .rtabs em { width: 15px; height: 15px; border-radius: 50%; background: #ff6c37; }
.rest { padding-left: 25px; gap: 41px; }
.env { border-left: 1px solid #ededed; }
.env span { width: 361px; padding-left: 37px; }
.env .dn { margin-right: 50px; }
.wbody { flex: 1; display: flex; min-height: 0; }
main { width: 1791px; border-right: 2px solid #ededed; }
.crumb { height: 88px; border-bottom: 1px solid #ededed; display: flex; align-items: center; padding-left: 34px; }
.mut { color: #a6a6a6; font-weight: 500; }
.sl { margin: 0 12.5px 0 12px; }
.crumb b { flex: 1; }
.save { width: 123px; height: 58px; background: #f2f2f2; border-radius: 7px; display: flex; align-items: center; padding-left: 19px; gap: 10px; color: #6b6b6b; font-weight: 600; }
.savedn { width: 43px; height: 58px; margin-left: 2px; border-radius: 0 7px 7px 0; background: #f2f2f2; display: grid; place-items: center; color: #6b6b6b; }
.more { margin: 0 37px 0 31px; color: #6b6b6b; }
.toggle { width: 149px; height: 58px; margin-right: 27px; border-left: 1px solid #ededed; background: linear-gradient(#e6e6e6, #e6e6e6) right/126px 100% no-repeat; border-radius: 0 7px 7px 0; display: flex; align-items: center; padding-left: 26px; }
.toggle div { width: 57px; height: 50px; background: #fff; border-radius: 6px; display: grid; place-items: center; margin-right: 18px; }
.lt { color: #a6a6a6; }
.send { padding: 15px 12px 0 14px; display: flex; justify-content: space-between; height: 87px; }
.url2 { width: 1568px; height: 72px; border: 1px solid #e3e3e3; border-radius: 6px; background: linear-gradient(#e3e3e3, #e3e3e3) 207px 0/1px 100% no-repeat #f2f2f2; display: grid; grid-template-columns: 151px 57px auto; justify-content: start; padding-left: 19px; align-items: center; color: #212121; }
.url2 span { padding-bottom: 2px; letter-spacing: .06px; }
.url2 .dn { color: #6b6b6b; }
.sbtn { width: 180px; height: 72px; border-radius: 7px; background: #097bed; color: #fff; display: flex; align-items: center; font-size: 25.2px; }
.sbtn b { width: 120px; text-align: center; }
.sbtn span { height: 72px; border-left: 1px solid #0a6ad0; flex: 1; display: grid; place-items: center; }
.rtabs { height: 72px; display: grid; grid-template-columns: 120px 179px 183px 118px 232px 98px 711px auto; padding-left: 29px; color: #6b6b6b; line-height: 84px; }
.rtabs .dk { color: #212121; }
.rtabs .on { color: #212121; box-shadow: inset 0 -4px #ff6c37; width: 139px; }
.rtabs i { color: #007f31; }
.rtabs em { display: inline-block; background: #0cbb52; margin-left: 8px; vertical-align: -1px; }
.rtabs b { color: #0265d2; }
.tablewrap { height: 647px; display: flex; border-bottom: 2px solid #e8e8e8; }
.table { width: 1770px; }
.tr { height: 59.4px; display: grid; grid-template-columns: 81px 557px 558px 574px; background: #f9f9f9; border-bottom: 1px solid #ededed; }
.tr.first { height: 54px; }
.tr.first span { padding-bottom: 7px; }
.tr.plain { background: #fff; }
.tr span { display: flex; align-items: center; border-right: 1px solid #ededed; padding: 0 0 2px 17px; }
.tr span:first-child { padding-left: 40px; }
.tr.ph { color: #a6a6a6; height: 57px; border: 0; }
.tr.ph span { padding-bottom: 4px; }
.tr span:last-child { border: 0; }
.ck { width: 31px; height: 31px; color: #262626; }
.ck.g { color: #a6a6a6; }
.inf { width: 22px; height: 22px; color: #6b6b6b; margin: 0 5px 0 auto; }
.bar { width: 11px; height: 638px; margin: 5px 0 0 5px; border-radius: 6px; background: #ededed; padding-top: 104px; }
.bar div { height: 534px; border-radius: 6px; background: #a6a6a6; }
.resp { height: 58px; display: grid; grid-template-columns: 81px 111px 152px 673px 50px 178px 162px 137px auto; justify-content: start; padding-left: 14px; align-items: center; color: #6b6b6b; }
.resp .on { color: #212121; width: 53px; line-height: 58px; box-shadow: inset 0 -4px #ff6c37; }
.resp i { color: #0cbb52; }
.resp b { color: #0265d2; display: flex; align-items: center; gap: 12px; border-left: 1px solid #e6e6e6; padding-left: 19px; line-height: 36px; }
.fmt { margin-top: 15px; height: 58px; padding-left: 14px; display: flex; color: #6b6b6b; }
.fmt > svg { margin-top: 15px; }
.seg { width: 507px; height: 54px; border-radius: 7px; background: #f2f2f2; display: grid; grid-template-columns: 120px 101px 139px 147px; overflow: hidden; line-height: 53px; }
.seg span { padding-left: 29px; }
.seg .on { background: #e6e6e6; color: #212121; }
.json { width: 142px; height: 57px; margin: 0 14px; background: #f2f2f2; border-radius: 7px; display: flex; align-items: center; padding-left: 18px; gap: 23px; }
.wrap { width: 58px; height: 57px; margin-right: 899px; background: #f2f2f2; border-radius: 7px; display: grid; place-items: center; }
.fmt .ic2 { margin-left: 45px; margin-top: 14px; }
.code { height: 18px; margin-top: 17px; overflow: hidden; display: flex; font: 21.6px/32px "Liberation Mono", monospace; padding-left: 64px; }
.ln { color: #237893; width: 51px; line-height: 34px; }
.brace { width: 13px; height: 32px; border: 1px solid #b9b9b9; background: #e4eee4; line-height: 32px; color: #000; font-weight: 700; }
.mini { margin-left: 1623px; width: 24px; border: solid #ddd; border-width: 1px 0 0 1px; background: linear-gradient(#a0a0a0, #a0a0a0) 8px 0/8px 100% no-repeat; }
.rrail { flex: 1; display: grid; grid-auto-rows: 86.4px; align-items: center; justify-items: center; color: #6b6b6b; }

footer { height: 45px; flex: none; border-top: 2px solid #e8e8e8; padding-left: 18px; display: grid; grid-template-columns: 62px 29px 1610px 30px 111px 29px 132px 29px 182px 28px 103px 27px 85px 50px 30px; align-items: center; color: #6b6b6b; background: #fff; padding-top: 1px; }
.con { padding-top: 3px; }

/* taskbar */
.task { height: 40px; flex: none; background: linear-gradient(90deg, #1e1e1e, #2d2d2d 55%, #1f1f1f); color: #fff; display: flex; font-family: "Open Sans", "Noto Sans CJK TC", sans-serif; }
.start { width: 48px; display: grid; place-items: center; }
.tsearch { width: 344px; border: 1px solid #5a5a5a; background: #333; display: flex; align-items: center; padding-left: 11px; font-size: 15.8px; color: #ddd; }
.tsearch span { margin-left: 13px; flex: 1; }
.birds { margin-right: -1px; }
.apps { display: flex; }
.apps div { width: 49.1px; display: grid; place-items: center; }
.apps svg { width: 24px; height: 24px; }
.apps .act { background: #4c4c4c; }
.apps .run { box-shadow: inset 0 -2px #d0d0d0; }
.glyph { font-size: 10.5px; font-weight: 700; fill: #fff; }
.tray { margin-left: auto; display: grid; grid-template-columns: 66px 22px 26px 20px 29px 19px 25px 33px 77px 37px; align-items: center; justify-items: center; padding-right: 8px; font-size: 12px; line-height: 18px; }
.tray svg { fill: none; stroke: #fff; stroke-width: 1.2; }
.ime { font-size: 16px; }
.zh { background: #fff; color: #111; width: 14px; height: 14px; line-height: 14px; font-size: 12px; text-align: center; }
.clock { text-align: center; }
.noti { padding-top: 5px; }
.noti svg { stroke-width: 1; }

/* pen marks drawn over the window */
.ink { position: absolute; inset: 0; width: 2560px; height: 1440px; fill: none; stroke: #0000ff; stroke-width: 2.2; stroke-linejoin: round; pointer-events: none; }
```
